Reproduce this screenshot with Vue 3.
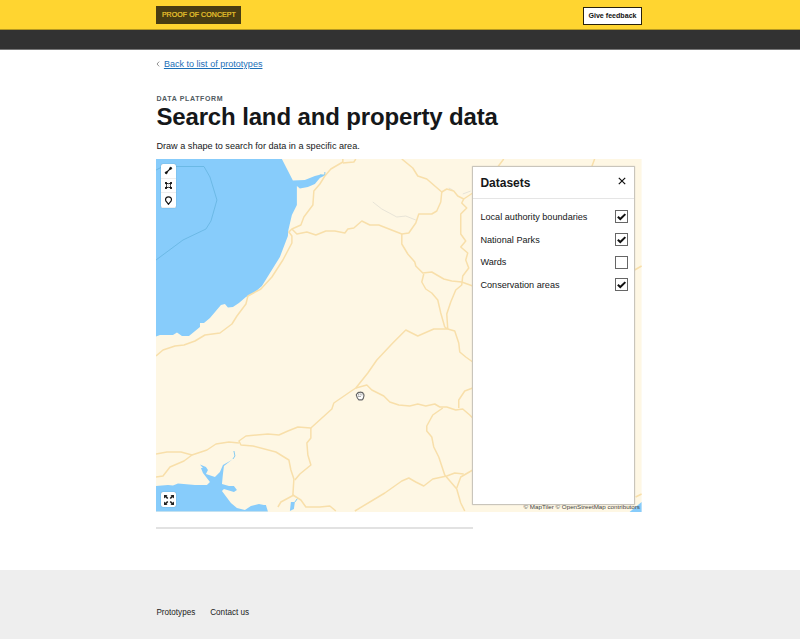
<script setup>
import { ref } from 'vue'

const datasets = ref([
  { name: 'Local authority boundaries', on: true },
  { name: 'National Parks', on: true },
  { name: 'Wards', on: false },
  { name: 'Conservation areas', on: true },
])

const roads = [
  'M343 159 V162 L331 169 L325 176 L320 184 L314 191 L313 205 L304 217 L301 225 L292 229 L289 232 L292 236 L292 243 L283 260 L272 277 L261 289 L248 296 L246 304 L237 316 L232 324 L220 333 L205 335 L195 341 L184 345 L175 346 L163 350 L156 356',
  'M343 163 L354 162 L356 159',
  'M292 229 L297 234 L307 232 L316 235 L326 231 L335 231 L345 233 L348 229 L354 228 L362 221 L370 225 L379 225 L402 234 L409 233 L416 223 L419 214 L432 214 L437 211 L441 202 L442 192 L427 179 L418 176 L413 168 L402 159',
  'M442 192 L447 189 L454 191 L458 196 L464 199 L473 193',
  'M402 234 L402 244 L408 254 L415 262 L416 266 L423 273 L432 272 L444 279 L452 281 L462 282 L473 286',
  'M464 199 L462 203 L467 208 L461 214 L461 234 L466 241 L461 247 L468 253 L466 260 L469 268 L463 276 L462 285 L456 290 L451 302 L447 314 L448 329',
  'M424 274 L422 282 L426 289 L432 293 L438 300 L441 313 L445 327 L448 329 L434 329 L418 336 L406 330 L400 336 L393 343 L377 360 L368 373 L356 388 L350 392 L334 403 L332 409 L311 428 L298 427 L288 431 L279 435 L268 434 L246 436 L239 441 L241 445 L253 446 L276 452 L289 460 L291 470 L294 479 L293 495 L301 500 L306 507 L320 507 L330 506 L336 511',
  'M448 329 L455 331 L459 343 L460 352 L466 357 L473 362',
  'M356 388 L367 385 L372 390 L384 396 L390 402 L399 405 L410 406 L418 404 L426 406 L435 404 L440 407 L447 407 L456 410 L463 409 L470 415 L473 418',
  'M473 388 L465 391 L459 400 L459 408',
  'M443 408 L433 415 L427 426 L427 431 L432 437 L434 447 L439 457 L445 475 L451 482 L457 489 L461 503 L465 511',
  'M355 511 L385 493 L402 481 L409 478 L416 482 L424 486 L433 479 L447 476 L455 473 L464 474',
  'M473 470 L461 477 L457 488',
  'M156 454 L167 452 L181 452 L192 455 L207 450 L216 444 L229 442 L239 443',
  'M192 455 L184 461 L170 467 L163 476 L156 477',
  'M311 428 L311 438 L307 443 L308 455 L311 465 L300 474 L295 480',
  'M294 495 L281 502 L278 507',
  'M498 167 L504 159 M592 167 L595 159 M635 270 L642 266 M636 497 L642 494',
]
const tools = ['Line', 'Polygon', 'Point']
</script>

<template>
  <div class="page">
    <header class="phase"><div class="wrap bar">
      <strong class="tag">PROOF OF CONCEPT</strong>
      <button class="feedback">Give feedback</button>
    </div></header>
    <div class="masthead"></div>
    <main class="wrap main">
      <nav class="back"><svg viewBox="0 0 4 6"><path d="M3.2.6 1 3l2.2 2.4" /></svg><a>Back to list of prototypes</a></nav>
      <span class="caption">DATA PLATFORM</span>
      <h1>Search land and property data</h1>
      <p>Draw a shape to search for data in a specific area.</p>
      <section class="map">
        <svg class="canvas" viewBox="156 159 486 353" preserveAspectRatio="none">
          <rect x="156" y="159" width="486" height="353" fill="#fef7e4" />
          <g class="water">
            <path d="M156 159 H282 L293 180.500 L305 180 L315 176 L321 174.500 L325 175.500 L320 178 L315 184 L308 187 L300 188.500 L297 186 V205 L292 215 L288.500 230 L288 236 L280 257 L262 286 L254 293 L246 297 L239 303 L233 307 L228 307.500 L225 304 L221 305 L210 318 L204 323 L200 323 L200 327 L189 336 L182 336 L177 332.500 L173 335 L160 335 L156 336.500Z" />
            <path d="M156 486 L168 485 L173 485.500 L178 483.500 L195 485 L207 485 L210 482 L203 473 L201 468 L203 468 L200 464.500 L206 467 L208 470 L206 474 L215 477 L220 472 L223 465 L230 461 L233 459 L224 466 L223 474 L222 484 L229 486 L234 486 L237 490 L234 492 L224 489 L222 491 L231 503 L237 508 L245 510 L251 506 L259 504 L264 505 L266 505 L268 511.500 H156Z" />
            <path d="M291 502 L295 502 L294 509 L290 511 Z M642 502 V512 H630Z" />
          </g>
          <path class="stream" d="M233 459 L235 456 L234 451 M295 502 L298 498 M325 176 V172 M320 175 H326" />
          <path class="boundary" d="M156 260 L183 240 L206 229 L211 221 L217 200 L210 177 L204 166.500 H163 L156 170" />
          <path class="trace" d="M373 202 L382 209 L397 217 L406 216 L416 220 M449 188 L453 190 M463 194 L471 191" />
          <path v-for="d in roads" :key="d" class="road" :d="d" />
        </svg>
        <div class="tools">
          <button v-for="(tool, i) in tools" :key="tool" :aria-label="tool">
            <svg viewBox="0 0 10 10">
              <g v-if="i === 0"><path d="M2.200 7.800 7.600 2.400" stroke-width="1.300" /><circle cx="2.500" cy="7.500" r="1.100" /><circle cx="7.400" cy="2.600" r="1.100" /></g>
              <g v-else-if="i === 1"><path d="M2.500 2.500Q5 3.500 7.500 2.500Q6.700 5 7.500 7.500Q5 6.500 2.500 7.500Q3.300 5 2.500 2.500Z" fill="none" stroke-width="1" /><path d="M1.200 1.200h2v2h-2zM6.800 1.200h2v2h-2zM1.200 6.800h2v2h-2zM6.800 6.800h2v2h-2z" stroke="none" /></g>
              <path v-else d="M5 9.200 3.200 6.900Q1.700 5.700 1.700 4.200a3.300 3.300 0 0 1 6.600 0Q8.300 5.700 6.800 6.900Z" fill="none" stroke-width="1.300" />
            </svg>
          </button>
        </div>
        <button class="expand" aria-label="Full screen">
          <svg viewBox="0 0 12 12"><path d="M1 1h3.600L3.500 2.100l1.800 1.800L4.200 5 2.300 3.300 1 4.600zM11 1v3.600L9.700 3.300 7.800 5 6.700 3.900l1.800-1.800L7.400 1zM1 11V7.400l1.300 1.300L4.200 7l1.100 1.100-1.800 1.800L4.600 11zM11 11H7.400l1.100-1.100-1.800-1.800L7.800 7l1.900 1.700L11 7.400z" /></svg>
        </button>
        <svg class="cursor" viewBox="0 0 10 10"><path d="M1.500 4.500Q1 3 2.500 2.500 3 1 4.300 1.500 5.500.6 6.300 1.500 7.800 1.200 8 2.500 9.200 3 8.900 5 8.600 8 7 8.900H4Q2 7.500 1.500 4.500Z" fill="#fff" stroke="#666" stroke-width="1.200" /><path d="M3.500 2.500v2M5.200 2.300v2M6.900 2.800v1.700M3 5.500h3" fill="none" stroke="#888" stroke-width=".7" /></svg>
        <small class="credit">© MapTiler © OpenStreetMap contributors</small>
        <aside class="panel">
          <div class="head"><h2>Datasets</h2><svg viewBox="0 0 8 8"><path d="M.8.800 7.200 7.200M7.200.800.800 7.200" /></svg></div>
          <div class="list">
            <label v-for="item in datasets" :key="item.name">
              <span>{{ item.name }}</span>
              <i class="box" @click="item.on = !item.on"><svg v-if="item.on" viewBox="0 0 12 12"><path d="M2 6.200 4.700 8.800 10.200 3.400" /></svg></i>
            </label>
          </div>
        </aside>
      </section>
      <hr>
    </main>
    <footer><div class="wrap links"><a>Prototypes</a><a>Contact us</a></div></footer>
  </div>
</template>

<style>
body { margin: 0; background: #fff; }
</style>
<style scoped>
* { box-sizing: border-box; }
.page { height: 639px; display: flex; flex-direction: column; overflow: hidden; font-family: "Liberation Sans", Arial, sans-serif; color: #151719; font-size: 9px; }
.wrap { width: 485.600px; margin-left: 156.400px; }
.phase { height: 30px; flex: none; background: #ffd530; border-bottom: 1px solid #b59822; }
.bar { display: flex; justify-content: space-between; align-items: flex-start; padding-top: 6px; }
.tag { width: 85px; height: 18px; background: #493d12; color: #f1cb30; font-size: 7px; line-height: 18px; font-weight: 400; text-align: center; white-space: nowrap; letter-spacing: .08px; -webkit-text-stroke: .2px #f1cb30; }
.feedback { width: 59px; height: 18px; margin-top: 1px; padding: 0; border: 1px solid #29220b; background: #fff; color: #111; font: 700 7.100px/15px "Liberation Sans", Arial, sans-serif; white-space: nowrap; }
.masthead { height: 20px; flex: none; background: #323232; border-bottom: 1px solid #777; }
.main { height: 520px; flex: none; display: flex; flex-direction: column; }
.back { display: flex; align-items: center; height: 12px; margin-top: 8px; color: #1d70b8; font-size: 9.060px; }
.back svg { width: 4px; height: 6px; margin-right: 3.500px; fill: none; stroke: #777; stroke-width: .8; }
.back a { text-decoration: underline; text-underline-offset: 1px; }
.caption { margin-top: 25px; height: 8px; line-height: 8px; font-size: 7px; font-weight: 700; color: #505a5f; letter-spacing: .65px; }
h1 { margin: 0; height: 27px; font-size: 24px; line-height: 27px; letter-spacing: -.14px; white-space: nowrap; }
p { margin: 10px 0 0; height: 19px; font-size: 9.130px; line-height: 12px; }
.map { position: relative; flex: none; height: 353px; overflow: hidden; }
.canvas { display: block; width: 100%; height: 353px; }
.water { fill: #87ccfb; }
.stream { fill: none; stroke: #83caf2; stroke-width: 1; }
.boundary { fill: none; stroke: #65b4df; stroke-width: .8; }
.trace { fill: none; stroke: #dedbd1; stroke-width: .7; }
.road { fill: none; stroke: #f8dfaa; stroke-width: 1.500; stroke-linejoin: round; }
.tools { position: absolute; left: 5px; top: 5px; width: 15px; height: 44px; border-radius: 2px; background: #fff; box-shadow: 0 0 1px #4d7894; display: flex; flex-direction: column; overflow: hidden; }
.tools button { flex: 1; display: grid; place-items: center; border: 0; border-bottom: 1px solid #eee; background: none; padding: 0; }
.tools svg { width: 9px; height: 9px; fill: #111; stroke: #111; }
.expand { position: absolute; left: 5px; bottom: 5px; width: 15px; height: 15px; padding: 0; border: 0; border-radius: 2px; background: #fff; box-shadow: 0 0 1px #4d7894; display: grid; place-items: center; }
.expand svg { width: 12px; height: 12px; fill: #222; }
.cursor { position: absolute; left: 199px; top: 232px; width: 10px; height: 10px; }
.credit { position: absolute; right: 2px; bottom: 1px; font-size: 6.220px; line-height: 8px; white-space: nowrap; color: #444; }
.panel { position: absolute; left: 316px; top: 7px; width: 163px; height: 339px; background: #fff; border: 1px solid #c9c5bb; border-radius: 1px; box-shadow: 0 0 1px #aaa; }
.head { height: 32px; padding: 0 8px 0 7px; display: flex; justify-content: space-between; align-items: center; border-bottom: 1px solid #e5e5e5; }
h2 { margin: 0; font-size: 12px; line-height: 14px; }
.head svg { width: 8px; height: 8px; margin-top: -4px; fill: none; stroke: #111; stroke-width: 1.200; }
.list { padding: 11.400px 6.500px 0 7px; display: flex; flex-direction: column; gap: 9.700px; font-size: 9.130px; }
label { height: 13px; display: flex; align-items: center; justify-content: space-between; white-space: nowrap; }
.box { width: 13px; height: 13px; border: 1px solid #666; background: #fff; }
.box svg { display: block; width: 11px; height: 11px; fill: none; stroke: #111; stroke-width: 2.200; }
hr { width: 317px; height: 2px; margin: 15px 0 0; border: 0; background: #e2e2e2; }
footer { flex: 1; background: #eee; }
.links { display: flex; gap: 15px; padding-top: 37px; font-size: 8.150px; line-height: 12px; color: #222; }
</style>
